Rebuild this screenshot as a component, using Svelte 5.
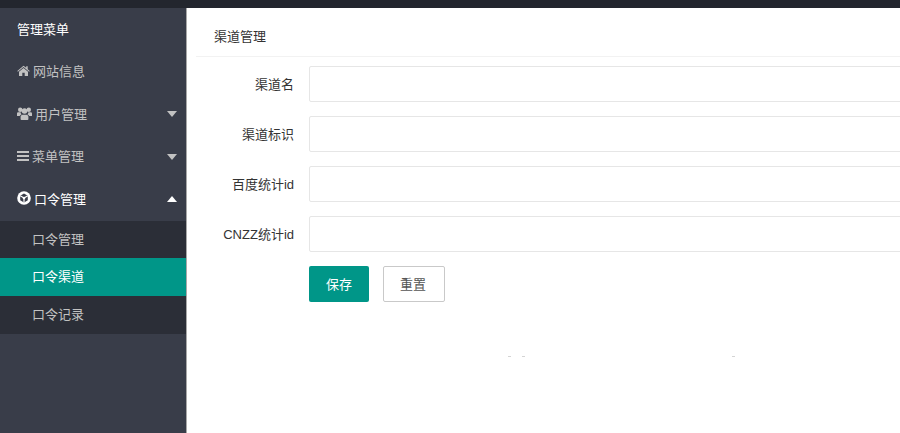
<script>
  const menu = [
    { label: '网站信息', icon: 'home' },
    { label: '用户管理', icon: 'users', arrow: 'down' },
    { label: '菜单管理', icon: 'bars', arrow: 'down' },
    { label: '口令管理', icon: 'cube', arrow: 'up', open: true },
  ];
  const subs = [
    { label: '口令管理' },
    { label: '口令渠道', active: true },
    { label: '口令记录' },
  ];
  const fields = ['渠道名', '渠道标识', '百度统计id', 'CNZZ统计id'];
</script>

<div class="page">
  <div class="topbar"></div>
  <div class="body">
    <aside class="side">
      <div class="side-title">管理菜单</div>
      {#each menu as item}
        <div class="item" class:open={item.open}>
          {#if item.icon === 'home'}
            <svg class="icon" width="13" height="11" viewBox="0 0 13 11"><path d="M6.5 0.8 0.3 6l.6.7L6.5 2l5.600 4.700.6-.7-2-1.700V1.200H9.200v1.500zM2 6.800V11h3.300V7.800h2.400V11H11V6.800L6.500 3z" fill="currentColor"/></svg>
          {:else if item.icon === 'users'}
            <svg class="icon" width="15" height="13" viewBox="0 0 15 13"><circle cx="3.200" cy="2.700" r="2.200" fill="currentColor"/><circle cx="11.800" cy="2.700" r="2.200" fill="currentColor"/><circle cx="7.500" cy="4" r="2.800" fill="currentColor"/><path d="M0 9V6.500c0-.8.600-1.300 1.400-1.300h2.200c0 1 .4 1.800 1 2.400C3.500 8 3 8.500 2.800 9zM15 9V6.500c0-.8-.6-1.300-1.400-1.300h-2.200c0 1-.4 1.800-1 2.400 1.100.4 1.600.9 1.800 1.400zM3.600 12.200V9.800c0-1 .8-2 2-2h3.800c1.200 0 2 1 2 2v2.400c0 .5-.4.800-.9.800H4.500c-.5 0-.9-.3-.9-.8z" fill="currentColor"/></svg>
          {:else if item.icon === 'bars'}
            <svg class="icon" width="12" height="10" viewBox="0 0 12 10"><path d="M0 0h12v2H0zM0 4h12v2H0zM0 8h12v2H0z" fill="currentColor"/></svg>
          {:else}
            <svg class="icon" width="14" height="14" viewBox="0 0 14 14"><circle cx="7" cy="7" r="6.800" fill="currentColor"/><path d="M7 2.600 10.800 4.800V9.200L7 11.400 3.200 9.200V4.800z" fill="#393d49"/><path d="M7 7V11.400M7 7 3.200 4.800M7 7 10.800 4.800" stroke="currentColor" stroke-width="1.200"/><circle cx="7" cy="7" r="1.300" fill="currentColor"/></svg>
          {/if}
          <span>{item.label}</span>
          {#if item.arrow}
            <i class="arrow {item.arrow}"></i>
          {/if}
        </div>
      {/each}
      <div class="subs">
        {#each subs as sub}
          <div class="sub" class:active={sub.active}>{sub.label}</div>
        {/each}
      </div>
    </aside>

    <main class="main">
      <div class="head"><span>渠道管理</span></div>
      <form class="form">
        {#each fields as f}
          <div class="row">
            <label for={f}>{f}</label>
            <input id={f} type="text" />
          </div>
        {/each}
        <div class="btns">
          <button type="button" class="btn save">保存</button>
          <button type="button" class="btn reset">重置</button>
        </div>
      </form>
    </main>
  </div>
  <i class="speck" style="left: 508px"></i>
  <i class="speck" style="left: 522px"></i>
  <i class="speck" style="left: 732px"></i>
</div>

<style>
  :global(body) {
    margin: 0;
    overflow: hidden;
    background: #fff;
  }

  .page {
    position: relative;
    width: 900px;
    height: 433px;
    overflow: hidden;
    font-family: "Liberation Sans", "Noto Sans CJK SC", sans-serif;
    font-size: 13px;
  }

  .topbar {
    height: 8px;
    background: #23262e;
  }

  .body {
    display: flex;
    height: 425px;
  }

  .side {
    width: 186px;
    flex: none;
    background: #393d49;
    border-right: 1px solid #a8a8a8;
    color: #c2c2c2;
  }

  .side-title {
    height: 42.500px;
    line-height: 43px;
    padding-left: 17px;
    color: #fff;
  }

  .item {
    box-sizing: border-box;
    height: 42.500px;
    display: flex;
    align-items: center;
    gap: 3px;
    padding: 0 9px 2px 17px;
  }

  .item.open {
    color: #fff;
  }

  .icon {
    flex: none;
  }

  .arrow {
    margin-left: auto;
    margin-top: 2px;
    width: 0;
    height: 0;
    border-left: 5.500px solid transparent;
    border-right: 5.500px solid transparent;
  }

  .arrow.down {
    border-top: 6px solid #c2c2c2;
  }

  .arrow.up {
    border-bottom: 6px solid #fff;
  }

  .subs {
    background: #2b2e37;
  }

  .sub {
    height: 37.800px;
    line-height: 38px;
    padding-left: 32px;
    color: #c2c2c2;
  }

  .sub.active {
    background: #009688;
    color: #fff;
  }

  .main {
    flex: 1;
    padding: 0 0 0 9px;
    min-width: 0;
  }

  .head {
    height: 48px;
    line-height: 57px;
    padding-left: 18px;
    border-bottom: 1px solid #f2f2f2;
    color: #333;
  }

  .form {
    padding-top: 9px;
  }

  .row {
    display: flex;
    align-items: center;
    height: 36px;
    margin-bottom: 14px;
  }

  label {
    width: 98px;
    text-align: right;
    color: #333;
    margin-right: 15px;
    padding-bottom: 2px;
  }

  input {
    flex: 1;
    height: 36px;
    box-sizing: border-box;
    border: 1px solid #e6e6e6;
    border-radius: 2px;
    margin-right: -10px;
    background: #fff;
    outline: none;
  }

  .btns {
    display: flex;
    gap: 14px;
    padding-left: 113px;
  }

  .btn {
    height: 36px;
    border-radius: 2px;
    font: inherit;
    padding: 0 0 2px;
  }

  .save {
    width: 60px;
    background: #009688;
    border: 0;
    color: #fff;
  }

  .reset {
    width: 62px;
    background: #fff;
    border: 1px solid #c9c9c9;
    color: #555;
    padding-right: 2px;
  }

  .speck {
    position: absolute;
    top: 356px;
    width: 3px;
    height: 1px;
    background: #d4d4d4;
  }
</style>
